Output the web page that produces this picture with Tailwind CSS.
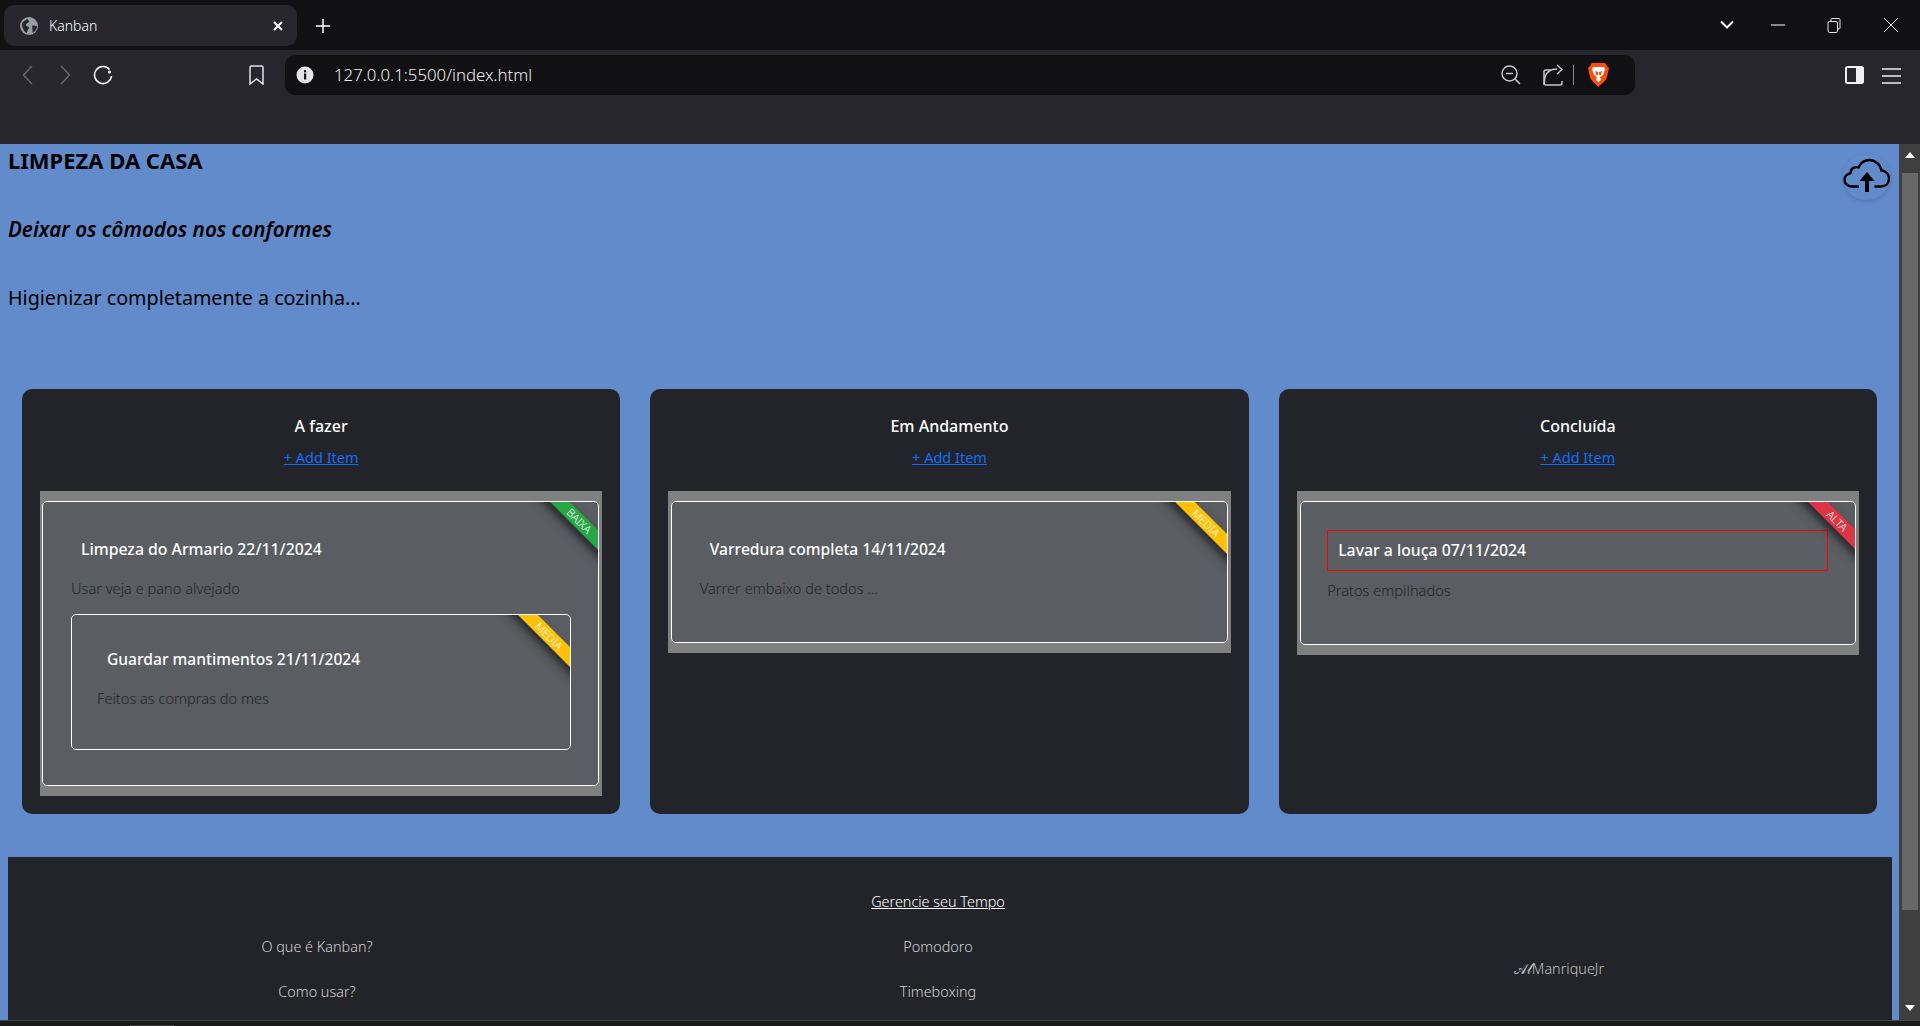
<!DOCTYPE html>
<html lang="pt-BR">

<head>
    <meta charset="UTF-8">
    <title>Kanban</title>
    <script src="https://cdn.jsdelivr.net/npm/@tailwindcss/browser@4"></script>
</head>

<body class="h-[1026px] overflow-hidden flex flex-col bg-[#26262c] font-['Noto_Sans',sans-serif]">
    <!-- barra de abas -->
    <div class="h-[50px] shrink-0 bg-[#111114] flex items-start text-white">
        <div class="mt-[5px] ml-[4px] w-[293px] h-[41px] rounded-[10px] bg-[#26262c] flex items-center">
            <svg class="ml-[16px] w-[18px] h-[18px]" viewBox="0 0 18 18"><circle cx="9" cy="9" r="9" fill="#9a9ca3"/><path d="M2 6c2-1 3-3 5-4 1 1 2 1 2 3-1 1-3 1-3 3s3 1 3 3c0 1-2 2-2 5C4 15 2 11 2 6zM12 9c2-1 3 0 5 0 0 3-2 5-4 7-1-2 0-3-1-7z" fill="#26262c"/></svg>
            <span class="ml-[11px] text-[14px] font-light">Kanban</span>
            <svg class="ml-auto mr-[14px] w-[10px] h-[10px]" viewBox="0 0 10 10" stroke="#fff" stroke-width="2"><path d="M1 1l8 8M9 1l-8 8"/></svg>
        </div>
        <svg class="mt-[19px] ml-[19px] w-[14px] h-[14px]" viewBox="0 0 14 14" stroke="#fff" stroke-width="1.5"><path d="M7 0v14M0 7h14"/></svg>
        <svg class="mt-[20px] ml-auto w-[14px] h-[10px]" viewBox="0 0 14 10" fill="none" stroke="#fff" stroke-width="2"><path d="M1 1.5l6 6 6-6"/></svg>
        <svg class="mt-[24px] ml-[37px] w-[14px] h-[2px]" viewBox="0 0 14 2" stroke="#fff" stroke-width="1"><path d="M0 1h14"/></svg>
        <svg class="mt-[18px] ml-[42px] w-[14px] h-[15px]" viewBox="0 0 14 15" fill="none" stroke="#e8e8e8" stroke-width="1"><rect x="1" y="3.5" width="9.5" height="11" rx="1.5"/><path d="M4 3V1.5C4 1 4.5.5 5 .5h7c.5 0 1 .5 1 1V10c0 .5-.5 1-1 1h-1"/></svg>
        <svg class="mt-[18px] ml-[43px] mr-[22px] w-[14px] h-[14px]" viewBox="0 0 14 14" stroke="#e8e8e8" stroke-width="1"><path d="M0 0l14 14M14 0L0 14"/></svg>
    </div>

    <!-- barra de endereco -->
    <div class="h-[94px] shrink-0 bg-[#26262c] pt-[5px] flex items-start text-white">
        <svg class="mt-[9px] ml-[22px] w-[11px] h-[22px]" viewBox="0 0 11 22" fill="none" stroke="#66666c" stroke-width="1.5"><path d="M10 2L1.5 11 10 20"/></svg>
        <svg class="mt-[9px] ml-[27px] w-[11px] h-[22px]" viewBox="0 0 11 22" fill="none" stroke="#66666c" stroke-width="1.5"><path d="M1 2l8.5 9L1 20"/></svg>
        <svg class="mt-[10px] ml-[22px] w-[20px] h-[20px]" viewBox="0 0 20 20" fill="none" stroke="#f2f2f2" stroke-width="1.6"><path d="M16.5 4.5A8.5 8.5 0 1 0 18.5 11"/><circle cx="16.5" cy="7" r="1.6" fill="#f2f2f2" stroke="none"/></svg>
        <svg class="mt-[10px] ml-[136px] w-[15px] h-[20px]" viewBox="0 0 15 20" fill="none" stroke="#e4e4e4" stroke-width="1.5"><path d="M2.5 1h10c.8 0 1.5.7 1.5 1.5V19l-6.5-5L1 19V2.5C1 1.7 1.7 1 2.5 1z"/></svg>
        <div class="ml-[21px] w-[1350px] h-[40px] rounded-[10px] bg-[#111114] flex items-center">
            <svg class="ml-[11px] w-[18px] h-[18px]" viewBox="0 0 18 18"><circle cx="9" cy="9" r="8.5" fill="#e4e4e4"/><rect x="8" y="7.5" width="2.2" height="6" fill="#111114"/><rect x="8" y="4.2" width="2.2" height="2.2" fill="#111114"/></svg>
            <span class="ml-[20px] text-[16.8px] font-light text-[#eeeeee]">127.0.0.1:5500/index.html</span>
            <svg class="ml-auto w-[20px] h-[20px]" viewBox="0 0 20 20" fill="none" stroke="#c8c8c8" stroke-width="1.5"><circle cx="8.5" cy="8.5" r="7.5"/><path d="M5 8.5h7M14 14l5 5"/></svg>
            <svg class="ml-[22px] w-[20px] h-[23px]" viewBox="0 0 20 23" fill="none" stroke="#c8c8c8" stroke-width="1.5"><path d="M8 6H3C2 6 1 7 1 8v11c0 1 1 2 2 2h14c1 0 2-1 2-2v-2"/><path d="M1 21l1-8c1-5 6-8 12-8M14 1l5 4.5-5 4.5"/></svg>
            <div class="ml-[10px] w-px h-[20px] bg-[#8a8a8a]"></div>
            <svg class="ml-[14px] w-[21px] h-[24px]" viewBox="0 0 21 24"><path d="M4 0h13l2 3 2 2-2 9c-1 4-6 7-8.5 10C8 21 3 18 2 14L0 5l2-2z" fill="#f9500f"/><path d="M5 4h11l1 2-2 6-3 2 1 3-2.5 2L8 17l1-3-3-2-2-6z" fill="#fff"/><path d="M7 8l3 1v3H8zM14 8l-3 1v3h2z" fill="#f9500f"/></svg>
            <div class="w-[26px] shrink-0"></div>
        </div>
        <svg class="mt-[11px] ml-[210px] w-[19px] h-[18px]" viewBox="0 0 19 18"><rect x="1" y="1" width="17" height="16" rx="1.5" fill="#26262c" stroke="#f0f0f0" stroke-width="2"/><rect x="11" y="1" width="7" height="16" fill="#f0f0f0"/></svg>
        <svg class="mt-[13px] ml-[18px] w-[19px] h-[16px]" viewBox="0 0 19 16" stroke="#f0f0f0" stroke-width="1.5"><path d="M0 1h19M0 8h19M0 15h19"/></svg>
    </div>

    <!-- pagina -->
    <div class="flex-1 min-h-0 flex">
        <main class="relative w-[1899px] h-[876px] overflow-hidden bg-[#628bcb] pl-[8px] pr-[7px] pt-[2px]">
            <button class="absolute top-[10px] right-[9px] w-[47px] h-[46px] rounded-full shadow-[0_2px_4px_rgba(0,0,0,0.15)]">
                <svg class="w-[48px] h-[48px]" viewBox="0 0 48 48" fill="none" stroke="#000" stroke-width="2.4"><path d="M31.5 32.5H38c4.5 0 8-3 8-8 0-4.5-3.5-7.8-7.5-8C37.5 10.5 32 6 26.5 6c-5 0-9 3-11 7.5-1-.4-2-.5-3-.3-3 .5-5 3-5 6-3.5 1-6 3.5-6 6.5 0 3.5 3 6.8 7 6.8h7.5"/><path d="M24 38V25" stroke-width="4"/><path d="M24 18l7.5 9h-15z" fill="#000" stroke="none"/></svg>
            </button>
            <h1 class="h-[28px] leading-[28px] text-[22px] font-bold text-black">LIMPEZA DA CASA</h1>
            <h2 class="mt-[41px] h-[28px] leading-[28px] text-[20.6px] italic font-semibold text-black">Deixar os cômodos nos conformes</h2>
            <p class="mt-[41px] h-[28px] leading-[28px] text-[19.7px] text-black">Higienizar completamente a cozinha...</p>

            <section class="mt-[77px] pl-[14px] pr-[15px] flex items-stretch gap-[30px]">
                <div class="flex-1 rounded-[10px] bg-[#23242a] px-[18px] pt-[25px] pb-[18px]">
                    <h3 class="h-[24px] leading-[24px] text-center text-[16px] font-medium text-white">A fazer</h3>
                    <a href="#" class="mt-[7px] block h-[24px] leading-[24px] text-center text-[14.5px] text-[#0d6efd]"><span class="underline">+ Add Item</span></a>
                    <div class="mt-[22px] bg-[#808080] pl-[2px] pr-[3.5px] py-[10px]">
                        <article class="relative rounded-[5px] border border-white bg-[#5a5d62] pl-[28px] pr-[26.5px] pt-[28px] pb-[35px]">
                            <div class="absolute top-0 right-0 w-[75px] h-[75px] overflow-hidden rounded-tr-[5px]">
                                <span class="absolute left-[-4px] top-[12px] w-[120px] h-[14px] leading-[14px] rotate-45 bg-[#28a745] text-center text-[11px] font-light text-white shadow-[0_5px_10px_rgba(0,0,0,0.6)]">BAIXA</span>
                            </div>
                            <h4 class="h-[39px] leading-[39px] px-[10px] text-[15.8px] font-medium text-white">Limpeza do Armario 22/11/2024</h4>
                            <p class="mt-[9px] h-[21px] leading-[21px] text-[14.6px] font-light text-[#212529]">Usar veja e pano alvejado</p>
                            <article class="relative mt-[15px] rounded-[5px] border border-white bg-[#5a5d62] px-[25px] pt-[25px] pb-[25px]">
                                <div class="absolute top-0 right-0 w-[75px] h-[75px] overflow-hidden rounded-tr-[5px]">
                                    <span class="absolute left-[-6px] top-[14px] w-[120px] h-[14px] leading-[14px] rotate-45 bg-[#ffc107] text-center text-[11px] font-light text-white shadow-[0_5px_10px_rgba(0,0,0,0.6)]">MEDIA</span>
                                </div>
                                <h4 class="h-[39px] leading-[39px] px-[10px] text-[15.6px] font-medium text-white">Guardar mantimentos 21/11/2024</h4>
                                <p class="mt-[9px] mb-[15px] h-[21px] leading-[21px] text-[14.6px] font-light text-[#212529]">Feitos as compras do mes</p>
                            </article>
                        </article>
                    </div>
                </div>

                <div class="flex-1 rounded-[10px] bg-[#23242a] px-[18px] pt-[25px] pb-[18px]">
                    <h3 class="h-[24px] leading-[24px] text-center text-[16px] font-medium text-white">Em Andamento</h3>
                    <a href="#" class="mt-[7px] block h-[24px] leading-[24px] text-center text-[14.5px] text-[#0d6efd]"><span class="underline">+ Add Item</span></a>
                    <div class="mt-[22px] bg-[#808080] px-[3px] py-[10px]">
                        <article class="relative rounded-[5px] border border-white bg-[#5a5d62] px-[27.5px] pt-[28px] pb-[28px]">
                            <div class="absolute top-0 right-0 w-[75px] h-[75px] overflow-hidden rounded-tr-[5px]">
                                <span class="absolute left-[-6px] top-[14px] w-[120px] h-[14px] leading-[14px] rotate-45 bg-[#ffc107] text-center text-[11px] font-light text-white shadow-[0_5px_10px_rgba(0,0,0,0.6)]">MEDIA</span>
                            </div>
                            <h4 class="h-[39px] leading-[39px] px-[10px] text-[15.6px] font-medium text-white">Varredura completa 14/11/2024</h4>
                            <p class="mt-[9px] mb-[15px] h-[21px] leading-[21px] text-[14.6px] font-light text-[#212529]">Varrer embaixo de todos ...</p>
                        </article>
                    </div>
                </div>

                <div class="flex-1 rounded-[10px] bg-[#23242a] px-[18px] pt-[25px] pb-[18px]">
                    <h3 class="h-[24px] leading-[24px] text-center text-[16px] font-medium text-white">Concluída</h3>
                    <a href="#" class="mt-[7px] block h-[24px] leading-[24px] text-center text-[14.5px] text-[#0d6efd]"><span class="underline">+ Add Item</span></a>
                    <div class="mt-[22px] bg-[#808080] pl-[3.5px] pr-[2.5px] py-[10px]">
                        <article class="relative rounded-[5px] border border-white bg-[#5a5d62] pl-[26px] pr-[27px] pt-[28px] pb-[28px]">
                            <div class="absolute top-0 right-0 w-[75px] h-[75px] overflow-hidden rounded-tr-[5px]">
                                <span class="absolute left-[-3.5px] top-[11.5px] w-[120px] h-[14px] leading-[14px] rotate-45 bg-[#dc3545] text-center text-[11px] font-light text-white shadow-[0_5px_10px_rgba(0,0,0,0.6)]">ALTA</span>
                            </div>
                            <h4 class="h-[41px] leading-[39px] px-[10px] border border-[#ff0000] text-[15.8px] font-medium text-white">Lavar a louça 07/11/2024</h4>
                            <p class="mt-[9px] mb-[15px] h-[21px] leading-[21px] text-[14.6px] font-light text-[#212529]">Pratos empilhados</p>
                        </article>
                    </div>
                </div>
            </section>

            <footer class="mt-[43px] bg-[#23242a] pt-[22.5px] pb-[40px] grid grid-cols-[repeat(3,618px)] gap-x-[3px] auto-rows-[45px] items-center text-center text-[14.4px] font-light text-[#d0d0d0]">
                <span></span>
                <a href="#" class="text-white underline">Gerencie seu Tempo</a>
                <span class="row-span-3 pt-[44px] text-[#c0c0c0]">𝒜𝓁ManriqueJr</span>
                <a href="#">O que é Kanban?</a>
                <a href="#">Pomodoro</a>
                <a href="#">Como usar?</a>
                <a href="#">Timeboxing</a>
            </footer>
        </main>

        <!-- barra de rolagem -->
        <div class="w-[21px] h-[876px] bg-[#3f3f3f] flex flex-col items-center">
            <div class="mt-[8px] w-0 h-0 border-x-[5px] border-x-transparent border-b-[6px] border-b-white"></div>
            <div class="mt-[15px] w-[16px] h-[737px] bg-[#686868]"></div>
            <div class="mt-[95px] w-0 h-0 border-x-[5px] border-x-transparent border-t-[6px] border-t-white"></div>
        </div>
    </div>
    <div class="h-[6px] shrink-0 bg-[#1a1a1a] border-t border-[#4a4a4a] pl-[130px] pt-[4px]">
        <div class="w-[44px] h-px bg-[#3a3a3a]"></div>
    </div>
</body>

</html>
